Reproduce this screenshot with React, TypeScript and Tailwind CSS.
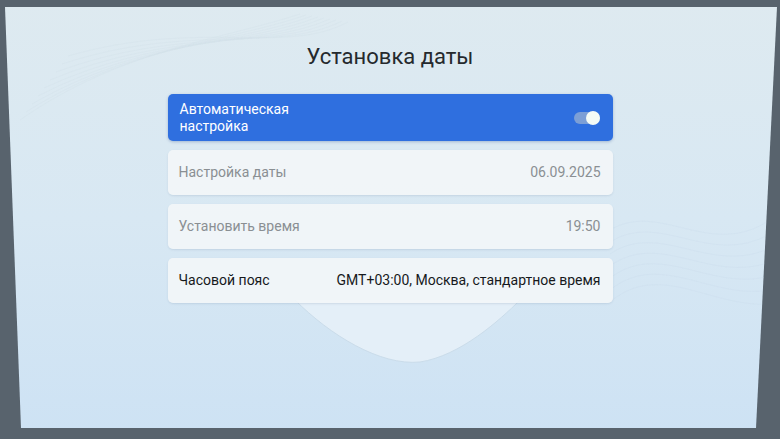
import { ReactNode } from 'react'

function Row({ label, value, dim, children }: { label: string; value?: string; dim?: boolean; children?: ReactNode }) {
  return (
    <div className="flex h-[45px] items-center justify-between rounded-[5px] bg-[#f3f6f8]/90 pl-[11px] pr-[12px] shadow-[0_1px_2px_rgba(80,110,140,0.15)]">
      <span className={dim ? 'text-[#8a8f93]' : 'text-[#16191c]'}>{label}</span>
      {value && <span className={dim ? 'text-[#8a8f93]' : 'text-[#16191c]'}>{value}</span>}
      {children}
    </div>
  )
}

export default function App() {
  return (
    <div className="h-[439px] w-[780px] overflow-hidden bg-[#58636d] font-['Roboto',sans-serif]">
      <div className="relative h-full w-full bg-gradient-to-b from-[#deeaf0] via-[#d8e8f3] to-[#cde2f4] [clip-path:polygon(5px_7px,777px_7px,756px_428px,21px_428px)]">
        <svg className="absolute inset-0 h-full w-full" viewBox="0 0 780 439" fill="none">
          <path d="M295 300 C330 335 380 366 420 362 C460 356 500 320 520 300 Z" fill="#e4eff8" />
          <path d="M295 300 C330 335 380 366 420 362 C460 356 500 320 520 300" stroke="#cadcea" strokeWidth="1" />
          {[0, 1, 2, 3, 4, 5, 6, 7, 8].map(i => (
            <path key={i} d={`M${20 + i * 6} ${120 - i * 8} C ${120 + i * 10} ${50 - i * 4}, ${220 + i * 8} ${40 + i * 2}, ${300 + i * 6} ${14 + i}`} stroke="#d2e0e8" strokeWidth="0.6" opacity="0.6" />
          ))}
          {[0, 1, 2, 3, 4, 5, 6].map(i => (
            <path key={'r' + i} d={`M${610} ${230 + i * 12} C ${660} ${200 + i * 10}, ${710} ${260 + i * 8}, ${770} ${220 + i * 14}`} stroke="#c8dbea" strokeWidth="0.6" opacity="0.5" />
          ))}
        </svg>
        <div className="relative flex flex-col items-center pt-[42px]">
          <h1 className="text-[22px] leading-[30px] text-[#25292d]">Установка даты</h1>
          <div className="mt-[22px] flex w-[445px] flex-col gap-[9px] text-[14px] leading-[17px]">
            <div className="flex h-[47px] items-center justify-between rounded-[5px] bg-[#2f6fdf] px-[12px] text-white shadow-[0_1px_3px_rgba(30,70,140,0.3)]">
              <span>
                Автоматическая
                <br />
                настройка
              </span>
              <div className="mr-[1px] flex h-[12px] w-[26px] items-center justify-end rounded-full bg-[#7c9fd6]">
                <div className="h-[14px] w-[14px] rounded-full bg-[#f4fbf6]" />
              </div>
            </div>
            <Row label="Настройка даты" value="06.09.2025" dim />
            <Row label="Установить время" value="19:50" dim />
            <Row label="Часовой пояс" value="GMT+03:00, Москва, стандартное время" />
          </div>
        </div>
      </div>
    </div>
  )
}
